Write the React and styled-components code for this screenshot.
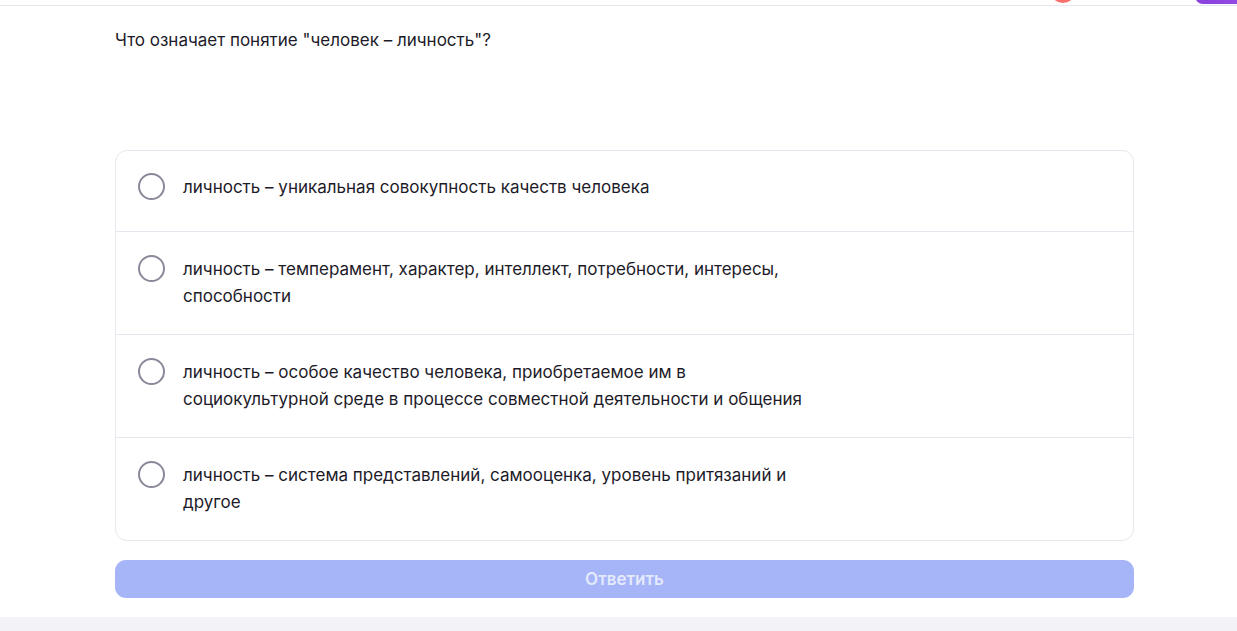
import React, { useState } from "react";
import styled, { createGlobalStyle } from "styled-components";

const GlobalStyle = createGlobalStyle`
  * { box-sizing: border-box; }
  html, body { margin: 0; padding: 0; background: #ffffff; }
  body {
    font-family: Inter, "Noto Sans", "Liberation Sans", sans-serif;
    color: #1d1b29;
  }
`;

const Page = styled.div`
  display: flex;
  flex-direction: column;
  min-height: 631px;
`;

const Header = styled.header`
  height: 6px;
  overflow: hidden;
  display: flex;
  align-items: flex-end;
  border-bottom: 1px solid #e7e6ee;
  padding-bottom: 1px;
`;

const Avatar = styled.span`
  width: 26px;
  height: 26px;
  border-radius: 50%;
  background: #fb6e6e;
  margin-left: 1050px;
  margin-bottom: 1px;
  flex-shrink: 0;
`;

const HeaderButton = styled.span`
  width: 80px;
  height: 36px;
  border-radius: 8px;
  background: linear-gradient(90deg, #8a40dc, #9d50ec);
  margin-left: auto;
  margin-right: -38px;
  flex-shrink: 0;
`;

const Main = styled.main`
  flex: 1;
  padding: 0 103px 18px 115px;
`;

const Question = styled.p`
  margin: 23px 0 0;
  font-size: 17px;
  line-height: 22px;
  color: #1d1b29;
`;

const Card = styled.div`
  margin-top: 99px;
  border: 1px solid #e7e6ee;
  border-radius: 12px;
  overflow: hidden;
`;

const Option = styled.label`
  display: flex;
  align-items: flex-start;
  gap: 18px;
  min-height: 80px;
  padding: 23px 22px 24px 22px;
  cursor: pointer;
  & + & {
    border-top: 1px solid #e7e6ee;
    padding-top: 24px;
  }
`;

const Radio = styled.span`
  width: 27px;
  height: 27px;
  margin-top: -1px;
  border-radius: 50%;
  border: 2.5px solid ${(p) => (p.$checked ? "#6d7cf5" : "#8b8899")};
  display: flex;
  align-items: center;
  justify-content: center;
  flex-shrink: 0;
  &::after {
    content: "";
    width: 13px;
    height: 13px;
    border-radius: 50%;
    background: ${(p) => (p.$checked ? "#6d7cf5" : "transparent")};
  }
`;

const OptionText = styled.span`
  max-width: 625px;
  font-size: 17px;
  line-height: 27px;
  color: #1d1b29;
`;

const SubmitButton = styled.button`
  display: block;
  width: 100%;
  height: 38px;
  margin-top: 19px;
  border: none;
  border-radius: 11px;
  background: #a6b5f8;
  color: rgba(255, 255, 255, 0.72);
  font-family: Inter, "Noto Sans", "Liberation Sans", sans-serif;
  font-size: 17px;
  font-weight: 600;
  cursor: default;
`;

const Footer = styled.footer`
  height: 14px;
  background: #f3f3f7;
`;

const answers = [
  "личность – уникальная совокупность качеств человека",
  "личность – темперамент, характер, интеллект, потребности, интересы, способности",
  "личность – особое качество человека, приобретаемое им в социокультурной среде в процессе совместной деятельности и общения",
  "личность – система представлений, самооценка, уровень притязаний и другое",
];

export default function App() {
  const [selected, setSelected] = useState(null);
  return (
    <Page>
      <GlobalStyle />
      <Header>
        <Avatar />
        <HeaderButton />
      </Header>
      <Main>
        <Question>Что означает понятие "человек – личность"?</Question>
        <Card>
          {answers.map((text, i) => (
            <Option key={i} onClick={() => setSelected(i)}>
              <Radio $checked={selected === i} />
              <OptionText>{text}</OptionText>
            </Option>
          ))}
        </Card>
        <SubmitButton disabled={selected === null}>Ответить</SubmitButton>
      </Main>
      <Footer />
    </Page>
  );
}
